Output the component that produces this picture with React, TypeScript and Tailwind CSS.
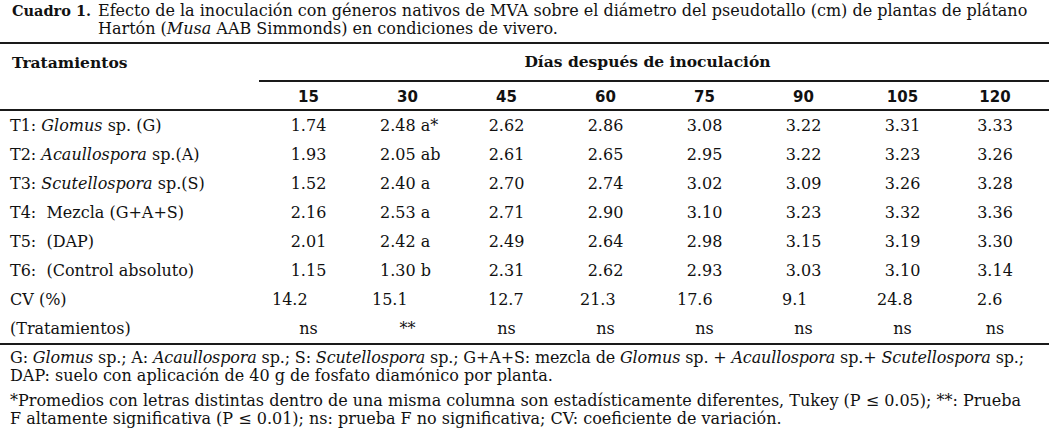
import React from "react";

const serif = "font-['DejaVu_Serif',serif]";

type Row = { label: React.ReactNode; vals: string[] };

const rows: Row[] = [
  { label: <>T1: <i>Glomus</i> sp. (G)</>, vals: ["1.74", "2.48 a*", "2.62", "2.86", "3.08", "3.22", "3.31", "3.33"] },
  { label: <>T2: <i>Acaullospora</i> sp.(A)</>, vals: ["1.93", "2.05 ab", "2.61", "2.65", "2.95", "3.22", "3.23", "3.26"] },
  { label: <>T3: <i>Scutellospora</i> sp.(S)</>, vals: ["1.52", "2.40 a", "2.70", "2.74", "3.02", "3.09", "3.26", "3.28"] },
  { label: <>T4:  Mezcla (G+A+S)</>, vals: ["2.16", "2.53 a", "2.71", "2.90", "3.10", "3.23", "3.32", "3.36"] },
  { label: <>T5:  (DAP)</>, vals: ["2.01", "2.42 a", "2.49", "2.64", "2.98", "3.15", "3.19", "3.30"] },
  { label: <>T6:  (Control absoluto)</>, vals: ["1.15", "1.30 b", "2.31", "2.62", "2.93", "3.03", "3.10", "3.14"] },
];

const cv = ["14.2", "15.1", "12.7", "21.3", "17.6", "9.1", "24.8", "2.6"];
const ns = ["ns", "**", "ns", "ns", "ns", "ns", "ns", "ns"];
const days = ["15", "30", "45", "60", "75", "90", "105", "120"];

const grid = "grid grid-cols-[259px_repeat(7,99px)_86px_1fr]";

function Rule() {
  return <div className="h-[2px] bg-[#1a1a1a]" />;
}

export default function App() {
  return (
    <div className={`w-[1053px] h-[432px] bg-white text-[#111] ${serif} text-[16px] overflow-hidden`}>
      {/* caption */}
      <div className="flex pt-[2px] pl-[12px] leading-[18px]">
        <span className="font-bold w-[86px] shrink-0 whitespace-nowrap text-[14.5px]">Cuadro 1.</span>
        <span>
          Efecto de la inoculación con géneros nativos de MVA sobre el diámetro del pseudotallo (cm) de plantas de plátano
          <br />
          Hartón (<i>Musa</i> AAB Simmonds) en condiciones de vivero.
        </span>
      </div>
      <div className="mt-[4px] mr-[4px]">
        <Rule />
        {/* header row 1 */}
        <div className={`${grid} h-[36px] items-center font-bold text-[15.5px]`}>
          <div className="pl-[12px] pt-[1px]">Tratamientos</div>
          <div className="col-span-8 text-center pr-[2px]">Días después de inoculación</div>
        </div>
        <div className="ml-[259px] h-[2px] bg-[#1a1a1a]" />
        {/* header row 2 */}
        <div className={`${grid} h-[27px] items-center font-bold font-['DejaVu_Sans',sans-serif] text-[15px]`}>
          <div />
          {days.map((d) => (
            <div key={d} className="text-center pt-[3px]">{d}</div>
          ))}
        </div>
        <Rule />
        {/* body */}
        {rows.map((r, i) => (
          <div key={i} className={`${grid} h-[29px] items-center whitespace-pre`}>
            <div className="pl-[10px]">{r.label}</div>
            {r.vals.map((v, j) =>
              j === 1 ? (
                <div key={j} className="pl-[22px]">{v}</div>
              ) : (
                <div key={j} className="text-center">{v}</div>
              )
            )}
          </div>
        ))}
        <div className={`${grid} h-[29px] items-center`}>
          <div className="pl-[10px]">CV (%)</div>
          <div className="pl-[13px]">{cv[0]}</div>
          <div className="pl-[14px]">{cv[1]}</div>
          <div className="pl-[31px]">{cv[2]}</div>
          <div className="pl-[24px]">{cv[3]}</div>
          <div className="pl-[22px]">{cv[4]}</div>
          <div className="pl-[28px]">{cv[5]}</div>
          <div className="pl-[24px]">{cv[6]}</div>
          <div className="pl-[25px]">{cv[7]}</div>
        </div>
        <div className={`${grid} h-[29px] items-center`}>
          <div className="pl-[10px]">(Tratamientos)</div>
          {ns.map((v, j) => (
            <div key={j} className="text-center">{v}</div>
          ))}
        </div>
        <Rule />
      </div>
      {/* footnotes */}
      <div className="pl-[10px] pt-[4px] leading-[18px]">
        <p className="whitespace-nowrap">
          <span className="tracking-[-0.15px]">
            G: <i>Glomus</i> sp.; A: <i>Acaullospora</i> sp.; S: <i>Scutellospora</i> sp.; G+A+S: mezcla de <i>Glomus</i> sp. + <i>Acaullospora</i> sp.+ <i>Scutellospora</i> sp.;
          </span>
          <br />
          DAP: suelo con aplicación de 40 g de fosfato diamónico por planta.
        </p>
        <p className="mt-[7px] whitespace-nowrap">
          *Promedios con letras distintas dentro de una misma columna son estadísticamente diferentes, Tukey (P ≤ 0.05); **: Prueba
          <br />
          F altamente significativa (P ≤ 0.01); ns: prueba F no significativa; CV: coeficiente de variación.
        </p>
      </div>
    </div>
  );
}
